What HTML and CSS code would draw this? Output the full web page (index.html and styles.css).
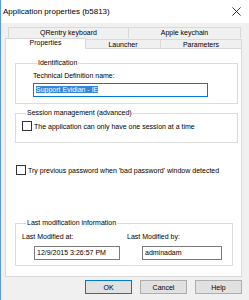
FILE: index.html
```html
<!DOCTYPE html>
<html lang="en">
<head>
    <meta charset="UTF-8">
    <title>Application properties</title>
    <link rel="stylesheet" href="styles.css">
</head>
<body>
    <div class="window">
        <div class="titlebar">
            <span class="title">Application properties (b5813)</span>
            <svg class="close" width="9" height="9" viewBox="0 0 9 9">
                <path d="M0.5 0.5 L8.5 8.5 M8.5 0.5 L0.5 8.5" stroke="#222" stroke-width="0.9" fill="none"/>
            </svg>
        </div>

        <!-- Tabs -->
        <div class="tabs">
            <div class="tab-row upper">
                <div class="tab wide">QRentry keyboard</div>
                <div class="tab apple">Apple keychain</div>
            </div>
            <div class="tab-row lower">
                <div class="tab active">Properties</div>
                <div class="tab launcher">Launcher</div>
                <div class="tab params">Parameters</div>
            </div>
        </div>

        <div class="panel">
            <fieldset class="group ident">
                <legend>Identification</legend>
                <div class="label">Technical Definition name:</div>
                <div class="textbox focused"><span class="selected">Support Evidian - IE</span></div>
            </fieldset>

            <fieldset class="group session">
                <legend>Session management (advanced)</legend>
                <label class="check"><span class="box"></span>The application can only have one session at a time</label>
            </fieldset>

            <label class="check loose"><span class="box"></span>Try previous password when 'bad password' window detected</label>

            <fieldset class="group lastmod">
                <legend>Last modification information</legend>
                <div class="cols">
                    <div class="col">
                        <div class="label">Last Modified at:</div>
                        <div class="textbox date">12/9/2015 3:26:57 PM</div>
                    </div>
                    <div class="col">
                        <div class="label">Last Modified by:</div>
                        <div class="textbox user">adminadam</div>
                    </div>
                </div>
            </fieldset>
        </div>

        <div class="buttons">
            <button class="btn default">OK</button>
            <button class="btn">Cancel</button>
            <button class="btn">Help</button>
        </div>
    </div>
</body>
</html>
```

FILE: styles.css
```css
* {
    box-sizing: border-box;
}

body {
    margin: 0;
    font-family: 'Liberation Sans', Arial, sans-serif;
    font-size: 7px;
    color: #000;
    background-color: #f0f0f0;
}

.window {
    width: 249px;
    height: 300px;
    border-left: 1px solid #5b9bd5;
    background-color: #f0f0f0;
}

.titlebar {
    height: 23px;
    background-color: #fff;
    display: flex;
    align-items: center;
    justify-content: space-between;
    padding: 0 8px 0 2px;
}

.title {
    font-size: 8px;
}

.tabs {
    padding: 4px 7px 0 4px;
}

.tab-row {
    display: flex;
    align-items: flex-end;
}

.tab-row.upper {
    padding-left: 3px;
}

.tab {
    height: 11px;
    line-height: 10px;
    text-align: center;
    border: 1px solid #d9d9d9;
    border-bottom: none;
    background-color: #f0f0f0;
    margin-right: -1px;
}

.tab.wide { width: 121px; }
.tab.apple { width: 113px; }
.tab.launcher { width: 76px; height: 9px; line-height: 9px; }
.tab.params { width: 82px; height: 9px; line-height: 9px; }

.tab.active {
    width: 81px;
    background-color: #fff;
    height: 11px;
    line-height: 8px;
    position: relative;
    z-index: 1;
    margin-bottom: -1px;
}

.panel {
    margin: 0 7px 0 4px;
    height: 229px;
    background-color: #fff;
    border: 1px solid #d9d9d9;
    padding: 10px 3px 0 9px;
}

.group {
    border: 1px solid #dcdcdc;
    margin: 0;
    min-width: 0;
}

.group legend {
    padding: 0 1px;
    margin-left: 4px;
    line-height: 8px;
    height: 8px;
}

.ident {
    height: 45px;
    padding: 5px 0 0 17px;
}

.label {
    height: 8px;
    line-height: 8px;
}

.textbox {
    height: 14px;
    line-height: 12px;
    border: 1px solid #7a7a7a;
    padding-left: 2px;
    margin-top: 3px;
    background-color: #fff;
}

.textbox.focused {
    width: 175px;
    border-color: #0078d7;
}

.selected {
    background-color: #3385db;
    color: #fff;
}

.session {
    margin-top: 5px;
    height: 34px;
    padding: 3px 0 0 6px;
}

.check {
    display: flex;
    align-items: center;
    height: 12px;
}

.box {
    width: 10px;
    height: 10px;
    border: 1px solid #333;
    background-color: #fff;
    margin-right: 2px;
}

.loose {
    margin: 21px 0 0 1px;
}

.lastmod {
    margin-top: 43px;
    width: 218px;
    height: 47px;
    padding: 6px 0 0 6px;
}

.cols {
    display: flex;
}

.col {
    width: 109px;
}

.textbox.date {
    width: 86px;
    margin-left: 12px;
    margin-top: 5px;
}

.textbox.user {
    width: 80px;
    margin-left: 15px;
    margin-top: 5px;
}

.buttons {
    display: flex;
    justify-content: flex-end;
    gap: 8px;
    padding: 3px 7px 0 0;
}

.btn {
    width: 47px;
    height: 14px;
    padding: 0;
    font-family: 'Liberation Sans', Arial, sans-serif;
    font-size: 7px;
    background-color: #e1e1e1;
    border: 1px solid #adadad;
    border-radius: 0;
}

.btn.default {
    border-color: #0078d7;
}
```
